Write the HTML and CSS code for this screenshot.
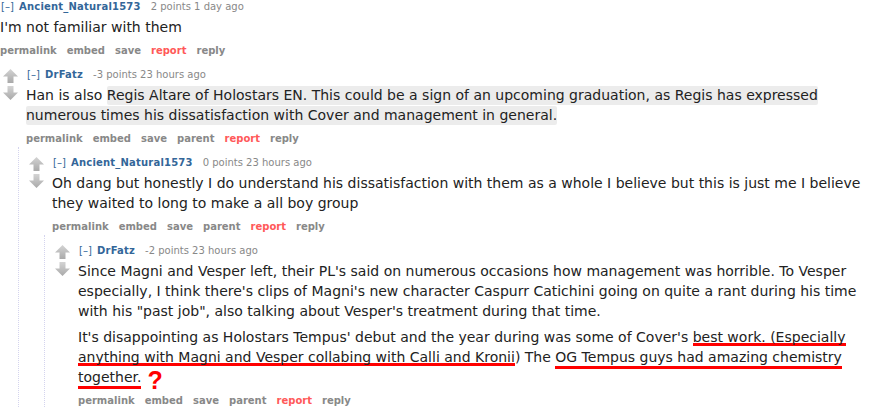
FILE: index.html
```html
<!DOCTYPE html>
<html lang="en">
<head>
<meta charset="utf-8">
<title>Comments</title>
<link rel="stylesheet" href="styles.css">
</head>
<body>
<svg width="0" height="0" class="defs" aria-hidden="true">
  <defs>
    <linearGradient id="ag" x1="0" y1="0" x2="0" y2="1">
      <stop offset="0" stop-color="#d4d4d4"/>
      <stop offset="1" stop-color="#a9a9a9"/>
    </linearGradient>
    <symbol id="up" viewBox="0 0 15 14"><polygon points="7.5,0 15,7.5 10.5,7.5 10.5,14 4.5,14 4.5,7.5 0,7.5" fill="url(#ag)"/></symbol>
    <symbol id="down" viewBox="0 0 15 14"><polygon points="4.5,0 10.5,0 10.5,6.5 15,6.5 7.5,14 0,6.5 4.5,6.5" fill="url(#ag)"/></symbol>
  </defs>
</svg>
<div class="thread">
  <div class="comment">
    <div class="row">
      <div class="midcol">
        <svg class="arrow"><use href="#up"/></svg>
        <svg class="arrow"><use href="#down"/></svg>
      </div>
      <div class="entry">
        <p class="tagline"><span class="expand">[–]</span> <span class="author">Ancient_Natural1573</span><span class="score">2 points</span> 1 day ago</p>
        <div class="md"><p>I'm not familiar with them</p></div>
        <ul class="buttons"><li>permalink</li><li>embed</li><li>save</li><li class="report">report</li><li>reply</li></ul>
      </div>
    </div>
    <div class="child first">
      <div class="comment">
        <div class="row">
          <div class="midcol">
            <svg class="arrow"><use href="#up"/></svg>
            <svg class="arrow"><use href="#down"/></svg>
          </div>
          <div class="entry">
            <p class="tagline"><span class="expand">[–]</span> <span class="author">DrFatz</span><span class="score">-3 points</span> 23 hours ago</p>
            <div class="md"><p>Han is also <span class="hl">Regis Altare of Holostars EN. This could be a sign of an upcoming graduation, as Regis has expressed<br>numerous times his dissatisfaction with Cover and management in general.</span></p></div>
            <ul class="buttons"><li>permalink</li><li>embed</li><li>save</li><li>parent</li><li class="report">report</li><li>reply</li></ul>
          </div>
        </div>
        <div class="child">
          <div class="comment">
            <div class="row">
              <div class="midcol">
                <svg class="arrow"><use href="#up"/></svg>
                <svg class="arrow"><use href="#down"/></svg>
              </div>
              <div class="entry">
                <p class="tagline"><span class="expand">[–]</span> <span class="author">Ancient_Natural1573</span><span class="score">0 points</span> 23 hours ago</p>
                <div class="md"><p>Oh dang but honestly I do understand his dissatisfaction with them as a whole I believe but this is just me I believe<br>they waited to long to make a all boy group</p></div>
                <ul class="buttons"><li>permalink</li><li>embed</li><li>save</li><li>parent</li><li class="report">report</li><li>reply</li></ul>
              </div>
            </div>
            <div class="child">
              <div class="comment">
                <div class="row">
                  <div class="midcol">
                    <svg class="arrow"><use href="#up"/></svg>
                    <svg class="arrow"><use href="#down"/></svg>
                  </div>
                  <div class="entry">
                    <p class="tagline"><span class="expand">[–]</span> <span class="author">DrFatz</span><span class="score">-2 points</span> 23 hours ago</p>
                    <div class="md">
                      <p>Since Magni and Vesper left, their PL's said on numerous occasions how management was horrible. To Vesper<br>especially, I think there's clips of Magni's new character Caspurr Catichini going on quite a rant during his time<br>with his "past job", also talking about Vesper's treatment during that time.</p>
                      <p>It's disappointing as Holostars Tempus' debut and the year during was some of Cover's <span class="mark-a">best work. (Especially<br>anything with Magni and Vesper collabing with Calli and Kronii</span>) The <span class="mark-b">OG Tempus guys had amazing chemistry<br>together.</span><span class="qmark">?</span></p>
                    </div>
                    <ul class="buttons"><li>permalink</li><li>embed</li><li>save</li><li>parent</li><li class="report">report</li><li>reply</li></ul>
                  </div>
                </div>
              </div>
            </div>
          </div>
        </div>
      </div>
    </div>
  </div>
</div>
</body>
</html>
```

FILE: styles.css
```css
html, body {
  margin: 0;
  padding: 0;
  background: #fff;
}

body {
  width: 870px;
  height: 416px;
  overflow: hidden;
  font-family: "DejaVu Sans", Verdana, sans-serif;
}

.defs {
  position: absolute;
  width: 0;
  height: 0;
}

.thread {
  margin-left: -33px;
  padding-top: 1px;
}

.comment {
  margin-left: 10px;
}

.row {
  display: flex;
  gap: 8px;
}

.midcol {
  flex: none;
  width: 15px;
  display: flex;
  flex-direction: column;
  gap: 3px;
}

.arrow {
  display: block;
  width: 15px;
  height: 14px;
}

.entry {
  flex: 1;
  min-width: 0;
}

.tagline {
  margin: 0;
  font-size: 10px;
  line-height: 12px;
  color: #888;
  white-space: nowrap;
}

.expand {
  color: #369;
  margin-left: 1px;
  margin-right: 2px;
}

.author {
  color: #369;
  font-weight: bold;
  letter-spacing: 0.2px;
  margin-right: 10px;
}

.md {
  margin-top: 4px;
  font-size: 14px;
  line-height: 20px;
  color: #222;
  white-space: nowrap;
}

.md p {
  margin: 0;
}

.md p + p {
  margin-top: 6px;
}

.hl {
  background: #ececec;
  padding: 1px 0 2px;
  border-radius: 2px;
  -webkit-box-decoration-break: clone;
  box-decoration-break: clone;
}

.mark-a,
.mark-b {
  background-image: linear-gradient(#f00, #f00);
  background-repeat: no-repeat;
  background-position: left bottom;
  background-size: 100% 3px;
  -webkit-box-decoration-break: clone;
  box-decoration-break: clone;
}

.mark-a {
  padding-bottom: 1px;
}

.mark-b {
  padding-bottom: 4px;
}

.qmark {
  display: inline-block;
  margin-left: 6px;
  font-family: "Liberation Sans", Arial, sans-serif;
  font-weight: bold;
  font-size: 25px;
  line-height: 0;
  color: #f00;
  vertical-align: -7px;
}

.buttons {
  display: flex;
  gap: 10px;
  list-style: none;
  margin: 8px 0 0;
  padding: 0;
  font-size: 10px;
  font-weight: bold;
  line-height: 12px;
  color: #888;
}

.buttons .report {
  color: #ff5959;
}

.child {
  margin-left: 15px;
  margin-top: 2px;
  padding-top: 10px;
  border-left: 1px dotted #d4d4ee;
}
```
